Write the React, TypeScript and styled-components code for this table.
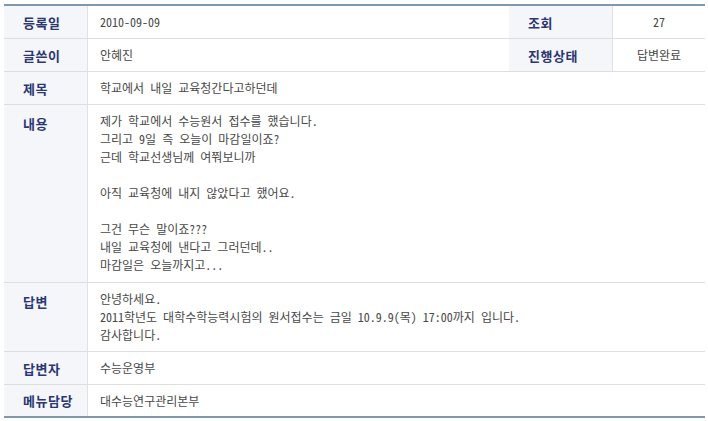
import React from "react";
import styled, { createGlobalStyle } from "styled-components";

const Global = createGlobalStyle`
  html, body { margin: 0; padding: 0; background: #ffffff; }
  body { font-family: "Noto Sans Mono CJK KR", "Noto Sans CJK KR", "Noto Sans", sans-serif; }
`;

const Table = styled.div`
  margin: 4px 0 0 4px;
  width: 701px;
  border-top: 2px solid #7f98ad;
  border-bottom: 2px solid #7f98ad;
`;

const Row = styled.div<{ $h: number; $last?: boolean }>`
  display: grid;
  grid-template-columns: 84px 1fr 104px 92px;
  box-sizing: border-box;
  min-height: ${(p) => p.$h}px;
  border-bottom: ${(p) => (p.$last ? "none" : "1px solid #dedede")};
`;

const Label = styled.div<{ $top?: boolean }>`
  background: #f4f6fa;
  border-right: 1px solid #dde2ea;
  color: #2b3672;
  font-family: "Noto Sans CJK KR", "Noto Sans", sans-serif;
  font-weight: 700;
  font-size: 13px;
  padding: ${(p) => (p.$top ? "9px 0 0 19px" : "0 0 0 19px")};
  display: flex;
  align-items: ${(p) => (p.$top ? "flex-start" : "center")};
  letter-spacing: 0.5px;
`;

const Value = styled.div<{ $span?: boolean; $multi?: boolean; $center?: boolean }>`
  grid-column: ${(p) => (p.$span ? "2 / 5" : "auto")};
  color: #484848;
  font-size: 12px;
  line-height: 18px;
  padding: ${(p) => (p.$multi ? "7px 0 7px 12px" : "0 0 0 12px")};
  display: flex;
  flex-direction: column;
  justify-content: ${(p) => (p.$multi ? "flex-start" : "center")};
  align-items: ${(p) => (p.$center ? "center" : "flex-start")};
  ${(p) => (p.$center ? "padding-left: 0;" : "")}
`;

const Line = styled.div`
  min-height: 18px;
  white-space: pre;
`;

const content = [
  "제가 학교에서 수능원서 접수를 했습니다.",
  "그리고 9일 즉 오늘이 마감일이죠?",
  "근데 학교선생님께 여쭤보니까",
  "",
  "아직 교육청에 내지 않았다고 했어요.",
  "",
  "그건 무슨 말이죠???",
  "내일 교육청에 낸다고 그러던데..",
  "마감일은 오늘까지고...",
];

const answer = [
  "안녕하세요.",
  "2011학년도 대학수학능력시험의 원서접수는 금일 10.9.9(목) 17:00까지 입니다.",
  "감사합니다.",
];

export default function App() {
  return (
    <>
      <Global />
      <Table>
        <Row $h={33}>
          <Label>등록일</Label>
          <Value>2010-09-09</Value>
          <Label>조회</Label>
          <Value $center>27</Value>
        </Row>
        <Row $h={33}>
          <Label>글쓴이</Label>
          <Value>안혜진</Value>
          <Label>진행상태</Label>
          <Value $center>답변완료</Value>
        </Row>
        <Row $h={33}>
          <Label>제목</Label>
          <Value $span>학교에서 내일 교육청간다고하던데</Value>
        </Row>
        <Row $h={178}>
          <Label $top>내용</Label>
          <Value $span $multi>
            {content.map((l, i) => (
              <Line key={i}>{l}</Line>
            ))}
          </Value>
        </Row>
        <Row $h={68}>
          <Label $top>답변</Label>
          <Value $span $multi>
            {answer.map((l, i) => (
              <Line key={i}>{l}</Line>
            ))}
          </Value>
        </Row>
        <Row $h={33}>
          <Label>답변자</Label>
          <Value $span>수능운영부</Value>
        </Row>
        <Row $h={31} $last>
          <Label>메뉴담당</Label>
          <Value $span>대수능연구관리본부</Value>
        </Row>
      </Table>
    </>
  );
}
